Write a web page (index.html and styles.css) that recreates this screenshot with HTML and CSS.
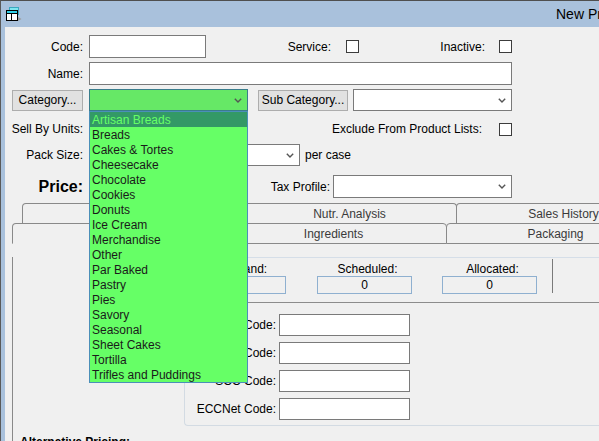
FILE: index.html
```html
<!DOCTYPE html>
<html>
<head>
<meta charset="utf-8">
<title>New Product</title>
<link rel="stylesheet" href="styles.css">
</head>
<body>
<div class="window">
  <div class="titlebar">
    <svg class="appicon" viewBox="0 0 16 15" width="16" height="15">
      <rect x="3.5" y="0.5" width="9" height="7" fill="#7fe6f0" stroke="#3aa8c0"/>
      <rect x="0.5" y="3.5" width="11" height="10" fill="#ffffff" stroke="#000000"/>
      <rect x="1" y="4" width="10" height="2" fill="#2fd0e8"/>
      <line x1="0.5" y1="6.5" x2="11.5" y2="6.5" stroke="#000"/>
      <line x1="5.5" y1="6.5" x2="5.5" y2="13.5" stroke="#000"/>
      <path d="M12 10 L15.5 12 L12 14 Z" fill="#9a9a9a"/>
    </svg>
    <span class="title">New Product</span>
  </div>
  <div class="body">
    <div class="row r-code">
      <span class="lbl">Code:</span>
      <div class="input w-code"></div>
      <span class="lbl-service">Service:</span>
      <span class="chk"></span>
      <span class="lbl-inactive">Inactive:</span>
      <span class="chk"></span>
    </div>
    <div class="row r-name">
      <span class="lbl">Name:</span>
      <div class="input w-name"></div>
    </div>
    <div class="row r-cat">
      <div class="btn btn-cat">Category...</div>
      <div class="combo combo-green w-cat">
        <svg class="chev" viewBox="0 0 8 5" width="8" height="5"><polyline points="0.8,0.8 4,4 7.2,0.8" fill="none" stroke="#555" stroke-width="1.4"/></svg>
      </div>
      <div class="btn btn-sub">Sub Category...</div>
      <div class="combo w-subcat">
        <svg class="chev" viewBox="0 0 8 5" width="8" height="5"><polyline points="0.8,0.8 4,4 7.2,0.8" fill="none" stroke="#555" stroke-width="1.4"/></svg>
      </div>
    </div>
    <div class="row r-sell">
      <span class="lbl">Sell By Units:</span>
      <span class="lbl-exclude">Exclude From Product Lists:</span>
      <span class="chk"></span>
    </div>
    <div class="row r-pack">
      <span class="lbl">Pack Size:</span>
      <div class="combo w-pack">
        <svg class="chev" viewBox="0 0 8 5" width="8" height="5"><polyline points="0.8,0.8 4,4 7.2,0.8" fill="none" stroke="#555" stroke-width="1.4"/></svg>
      </div>
      <span class="percase">per case</span>
    </div>
    <div class="row r-price">
      <span class="lbl lbl-price">Price:</span>
      <span class="lbl-tax">Tax Profile:</span>
      <div class="combo w-tax">
        <svg class="chev" viewBox="0 0 8 5" width="8" height="5"><polyline points="0.8,0.8 4,4 7.2,0.8" fill="none" stroke="#555" stroke-width="1.4"/></svg>
      </div>
    </div>

    <div class="tabs">
      <div class="tabrow back">
        <div class="tab t-gen">General</div>
        <div class="tab t-nutr">Nutr. Analysis</div>
        <div class="tab t-sales">Sales History</div>
      </div>
      <div class="tabrow front">
        <div class="tab sel t-inv">Inventory</div>
        <div class="tab t-ingr">Ingredients</div>
        <div class="tab t-pack">Packaging</div>
      </div>
      <div class="panel">
        <div class="qty">
          <div class="qcol q1">
            <div class="qlbl">On Hand:</div>
            <div class="qbox"></div>
          </div>
          <div class="qcol q2">
            <div class="qlbl">Scheduled:</div>
            <div class="qbox">0</div>
          </div>
          <div class="qcol q3">
            <div class="qlbl">Allocated:</div>
            <div class="qbox">0</div>
          </div>
          <div class="vsep"></div>
        </div>
        <div class="group">
          <div class="grow"><span class="glbl">UPC Code:</span><div class="input w-gcode"></div></div>
          <div class="grow"><span class="glbl">GTIN Code:</span><div class="input w-gcode"></div></div>
          <div class="grow"><span class="glbl">SCC Code:</span><div class="input w-gcode"></div></div>
          <div class="grow"><span class="glbl">ECCNet Code:</span><div class="input w-gcode"></div></div>
        </div>
        <div class="alt">Alternative Pricing:</div>
      </div>
    </div>

    <ul class="dropdown">
      <li class="selected">Artisan Breads</li>
      <li>Breads</li>
      <li>Cakes &amp; Tortes</li>
      <li>Cheesecake</li>
      <li>Chocolate</li>
      <li>Cookies</li>
      <li>Donuts</li>
      <li>Ice Cream</li>
      <li>Merchandise</li>
      <li>Other</li>
      <li>Par Baked</li>
      <li>Pastry</li>
      <li>Pies</li>
      <li>Savory</li>
      <li>Seasonal</li>
      <li>Sheet Cakes</li>
      <li>Tortilla</li>
      <li>Trifles and Puddings</li>
    </ul>
  </div>
</div>
</body>
</html>
```

FILE: styles.css
```css
* { box-sizing: border-box; }
html, body { margin: 0; padding: 0; }
body {
  width: 599px;
  height: 441px;
  overflow: hidden;
  font-family: "Liberation Sans", Arial, sans-serif;
  font-size: 12px;
  color: #000;
  background: #a9c1dc;
}
.window {
  width: 599px;
  height: 441px;
  border-top: 1px solid #4f4f4f;
  border-left: 1px solid #5a5a5a;
  background: #a9c1dc;
  display: flex;
  flex-direction: column;
  overflow: hidden;
}
.titlebar {
  height: 26px;
  flex: none;
  display: flex;
  align-items: center;
  padding-left: 5px;
  white-space: nowrap;
}
.appicon { flex: none; width: 16px; height: 15px; }
.title { margin-left: 534px; font-size: 14px; color: #000; }

.body {
  flex: 1;
  margin-left: 4px;
  background: #f0f0f0;
  position: relative;
  padding-top: 8px;
  min-width: 0;
  overflow: hidden;
}
.row { display: flex; align-items: center; white-space: nowrap; }
.r-code { height: 23px; }
.r-name { height: 23px; margin-top: 4px; }
.r-cat { height: 22px; margin-top: 4px; }
.r-sell { height: 22px; margin-top: 7px; }
.r-pack { height: 22px; margin-top: 4px; }
.r-price { height: 23px; margin-top: 9px; }

.lbl { flex: none; width: 78px; text-align: right; margin-right: 6px; }
.lbl-price { font-size: 16px; font-weight: bold; }
.lbl-service { flex: none; width: 125px; text-align: right; margin-right: 15px; }
.lbl-inactive { flex: none; width: 126px; text-align: right; margin-right: 14px; }
.lbl-exclude { flex: none; width: 393px; text-align: right; margin-right: 17px; }
.lbl-tax { flex: none; width: 247px; text-align: right; margin-right: 3px; margin-left: -6px; }
.percase { margin-left: 5px; }

.input { flex: none; height: 23px; background: #fff; border: 1px solid #7a7a7a; }
.w-code { width: 117px; }
.w-name { width: 423px; }

.chk { flex: none; width: 13px; height: 13px; border: 1px solid #3c3c3c; background: #fff; }

.btn {
  flex: none;
  height: 21px;
  background: #e1e1e1;
  border: 1px solid #adadad;
  display: flex;
  align-items: center;
  justify-content: center;
}
.btn-cat { width: 71px; margin-left: 7px; margin-right: 6px; }
.btn-sub { width: 90px; margin-left: 10px; margin-right: 5px; }

.combo {
  flex: none;
  height: 22px;
  background: #fff;
  border: 1px solid #7a7a7a;
  display: flex;
  align-items: center;
  justify-content: flex-end;
  padding-right: 5px;
}
.combo-green { background: #66e866; border-color: #3a7d8c; }
.chev { display: block; }
.w-cat { width: 159px; }
.w-subcat { width: 159px; }
.w-pack { width: 211px; }
.w-tax { width: 179px; height: 23px; }

/* tabs */
.tabs { margin-top: 5px; margin-left: 7px; }
.tabrow { display: flex; height: 20px; white-space: nowrap; }
.tabrow.back { margin-left: 10px; }
.tabrow.front { height: 21px; }
.tab {
  flex: none;
  border: 1px solid #898989;
  border-bottom: none;
  border-radius: 4px 4px 0 0;
  margin-right: -1px;
  display: flex;
  align-items: center;
  justify-content: center;
  color: #3a3a3a;
  background: #f0f0f0;
}
.tabrow.front .tab { border-bottom: 1px solid #898989; }
.tabrow.front .tab.sel { border-bottom-color: #f0f0f0; }
.t-gen { width: 221px; }
.t-nutr { width: 215px; }
.t-sales { width: 215px; }
.t-inv { width: 209px; }
.t-ingr { width: 227px; }
.t-pack { width: 219px; }

.panel { border-left: 1px solid #898989; height: 200px; }

.qty {
  margin-left: 171px;
  margin-top: 13px;
  border-top: 1px solid #d5dee8;
  height: 45px;
  display: flex;
  align-items: flex-start;
}
.qcol { flex: none; width: 95px; margin-top: 5px; }
.q1 { margin-left: 7px; }
.q2 { margin-left: 31px; }
.q3 { margin-left: 30px; }
.qlbl { height: 13px; line-height: 13px; text-align: center; padding-left: 6px; white-space: nowrap; }
.qbox {
  height: 18px;
  border: 1px solid #8fb0d0;
  text-align: center;
  line-height: 16px;
  background: #f0f0f0;
}
.vsep { flex: none; width: 1px; height: 34px; margin-top: 1px; margin-left: 15px; background: #7a7a7a; }

.group {
  margin-left: 171px;
  border-top: 1px solid #8c8c8c;
  border-left: 1px solid #d3dbe3;
  border-bottom: 1px solid #d3dbe3;
  border-bottom-left-radius: 4px;
  padding: 11px 0 5px;
}
.grow { display: flex; align-items: center; height: 22px; margin-bottom: 6px; }
.grow:last-child { margin-bottom: 0; }
.glbl { flex: none; width: 91px; text-align: right; margin-right: 3px; white-space: nowrap; }
.w-gcode { width: 131px; height: 22px; }

.alt { margin-left: 7px; margin-top: 9px; font-weight: bold; line-height: 14px; }

/* open category list */
.dropdown {
  position: absolute;
  left: 84px;
  top: 84px;
  width: 159px;
  height: 272px;
  margin: 0;
  padding: 0;
  list-style: none;
  border: 1px solid #4b8fb8;
  background: #66ff66;
  z-index: 5;
}
.dropdown li {
  height: 15px;
  line-height: 13px;
  padding-top: 2px;
  padding-left: 2px;
  color: #1a1a1a;
  white-space: nowrap;
}
.dropdown li.selected { background: #339966; color: #66ff66; }
```
